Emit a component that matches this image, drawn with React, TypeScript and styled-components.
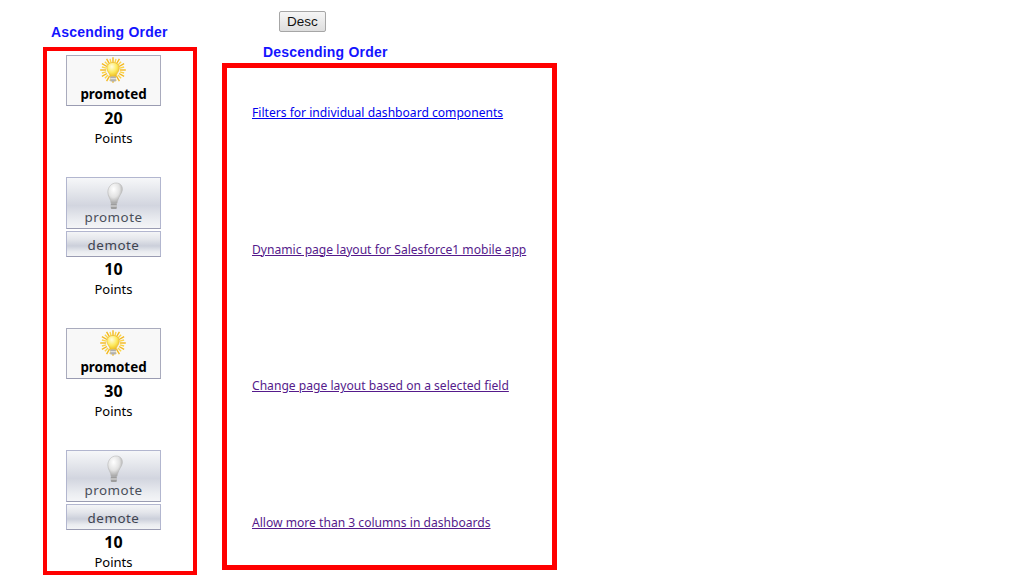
import React from "react";
import styled, { createGlobalStyle } from "styled-components";

const Global = createGlobalStyle`
  html, body { margin: 0; padding: 0; background: #fff; }
  body { font-family: "Noto Sans", "Open Sans", sans-serif; color: #000; }
`;

const Page = styled.div`
  display: flex;
  align-items: flex-start;
  padding-left: 43px;
  gap: 25px;
`;

const Column = styled.section`
  display: flex;
  flex-direction: column;
`;

const LeftColumn = styled(Column)`
  width: 154px;
  padding-top: 24px;
`;

const RightColumn = styled(Column)`
  width: 335px;
  padding-top: 11px;
`;

const Heading = styled.h2<{ $offset: number; $top?: number }>`
  margin: ${(p) => p.$top ?? 0}px 0 0;
  font: bold 14px/16px "Liberation Sans", Arial, sans-serif;
  color: #1414ff;
  letter-spacing: 0.2px;
  height: 16px;
  padding-left: ${(p) => p.$offset}px;
  white-space: nowrap;
`;

const SortButton = styled.button`
  align-self: flex-start;
  margin-left: 57px;
  width: 47px;
  height: 21px;
  padding: 0;
  border: 1px solid #a6a6a6;
  border-radius: 2px;
  background: linear-gradient(#f6f6f6, #dedede);
  font: 13.5px/18px "Liberation Sans", Arial, sans-serif;
  color: #111;
`;

const VoteBox = styled.div`
  box-sizing: border-box;
  margin-top: 7px;
  height: 528px;
  border: 4px solid #f00;
  padding: 4px 0 0 19px;
  display: flex;
  flex-direction: column;
`;

const Idea = styled.article<{ $gap: boolean }>`
  width: 95px;
  display: flex;
  flex-direction: column;
  align-items: center;
  padding-bottom: ${(p) => (p.$gap ? 29 : 0)}px;
`;

const greyFace = "linear-gradient(#f6f7f9 0%, #e6e8ed 25%, #d2d5df 55%, #ebedf1 85%, #f4f5f7 100%)";

const VoteTile = styled.div<{ $on: boolean }>`
  box-sizing: border-box;
  width: 95px;
  height: ${(p) => (p.$on ? 51 : 52)}px;
  border: 1px solid ${(p) => (p.$on ? "#a9abbd" : "#b2b6cf")};
  border-bottom-color: #9a9cb2;
  background: ${(p) => (p.$on ? "#f8f8f8" : greyFace)};
  display: flex;
  flex-direction: column;
  align-items: center;
  padding-top: 1px;
  font-size: 13.4px;
  line-height: 18px;
  letter-spacing: ${(p) => (p.$on ? 0 : 0.5)}px;
  font-weight: ${(p) => (p.$on ? 700 : 400)};
  color: ${(p) => (p.$on ? "#000" : "#4a4f5a")};
  svg { display: block; margin-top: ${(p) => (p.$on ? 0 : 3)}px; margin-bottom: ${(p) => (p.$on ? 0 : -2)}px; }
`;

const DemoteTile = styled.div`
  box-sizing: border-box;
  width: 95px;
  height: 26px;
  margin-top: 2px;
  border: 1px solid #b2b6cf;
  border-bottom-color: #9a9cb2;
  background: linear-gradient(#f4f5f7 0%, #e4e6eb 30%, #cbcfda 58%, #eaecf0 82%, #f3f4f6 100%);
  text-align: center;
  font-size: 13.4px;
  line-height: 26px;
  letter-spacing: 0.5px;
  color: #3e4350;
`;

const Score = styled.div`
  margin-top: 2px;
  font-size: 16px;
  font-weight: 700;
  line-height: 20px;
`;

const Unit = styled.div`
  font-size: 13px;
  line-height: 20px;
`;

const LinkBox = styled.div`
  box-sizing: border-box;
  margin-top: 3px;
  height: 507px;
  border: 5px solid #f00;
  padding: 36px 0 0 25px;
  display: grid;
  grid-auto-rows: 136.67px;
  align-content: start;
`;

const IdeaLink = styled.a<{ $visited?: boolean }>`
  font-size: 12.1px;
  line-height: 18px;
  height: 18px;
  justify-self: start;
  white-space: nowrap;
  color: ${(p) => (p.$visited ? "#551a8b" : "#0000ee")};
  text-decoration: underline;
`;

const Bulb = ({ lit }: { lit: boolean }) => {
  const id = lit ? "lit" : "off";
  const rays = Array.from({ length: 24 }, (_, i) => (i * 360) / 24);
  return (
    <svg width="28" height="28" viewBox="0 0 28 28" aria-hidden="true">
      <defs>
        <radialGradient id={id} cx="0.4" cy="0.3" r="0.8">
          <stop offset="0" stopColor={lit ? "#fffde0" : "#ffffff"} />
          <stop offset="0.5" stopColor={lit ? "#fdea60" : "#e2e2e2"} />
          <stop offset="1" stopColor={lit ? "#e8b010" : "#8f8f8f"} />
        </radialGradient>
      </defs>
      {lit &&
        rays.map((a, i) => (
          <line
            key={a}
            x1="13"
            y1={i % 2 ? 1.5 : 0.2}
            x2="13"
            y2="6"
            stroke={i % 2 ? "#fbd546" : "#f4b81e"}
            strokeWidth="1.4"
            transform={`rotate(${a} 13 13)`}
          />
        ))}
      {lit ? (
        <>
          <path
            d="M13 5.500c3.900 0 6.300 2.800 6.300 5.800 0 3.200-2.600 4.600-3.200 8.200h-5.900c-.5-3.600-3.400-5-3.400-8.200 0-3 2.400-5.800 6.200-5.800z"
            fill={`url(#${id})`}
            stroke="#e9b425"
            strokeWidth="0.6"
          />
          <rect x="10.300" y="19.500" width="5.600" height="5" rx="1" fill="#b0b0b0" />
          <rect x="10.300" y="21.200" width="5.600" height="1" fill="#ececec" />
        </>
      ) : (
        <>
          <path
            d="M16 1c4.400 0 7 3.200 6.300 7.200-.6 3.600-4.200 6.600-5.300 13.300h-6c.2-4.600-3.500-7-3.200-11.800C8.100 4.900 11.500 1 16 1z"
            fill={`url(#${id})`}
            stroke="#b8b8b8"
            strokeWidth="0.6"
          />
          <rect x="10.800" y="21.500" width="6" height="5.500" rx="1" fill="#9d9d9d" />
          <rect x="10.800" y="23.500" width="6" height="1" fill="#e4e4e4" />
        </>
      )}
    </svg>
  );
};

const ideas = [
  { points: 20, promoted: true },
  { points: 10, promoted: false },
  { points: 30, promoted: true },
  { points: 10, promoted: false },
];

const links = [
  { text: "Filters for individual dashboard components", visited: false },
  { text: "Dynamic page layout for Salesforce1 mobile app", visited: true },
  { text: "Change page layout based on a selected field", visited: true },
  { text: "Allow more than 3 columns in dashboards", visited: true },
];

export default function App() {
  return (
    <Page>
      <Global />
      <LeftColumn>
        <Heading $offset={8}>Ascending Order</Heading>
        <VoteBox>
          {ideas.map((idea, i) => (
            <Idea key={i} $gap={i < ideas.length - 1}>
              <VoteTile $on={idea.promoted}>
                <Bulb lit={idea.promoted} />
                {idea.promoted ? "promoted" : "promote"}
              </VoteTile>
              {!idea.promoted && <DemoteTile>demote</DemoteTile>}
              <Score>{idea.points}</Score>
              <Unit>Points</Unit>
            </Idea>
          ))}
        </VoteBox>
      </LeftColumn>
      <RightColumn>
        <SortButton type="button">Desc</SortButton>
        <Heading $offset={41} $top={12}>Descending Order</Heading>
        <LinkBox>
          {links.map((l) => (
            <IdeaLink key={l.text} href="#" $visited={l.visited}>
              {l.text}
            </IdeaLink>
          ))}
        </LinkBox>
      </RightColumn>
    </Page>
  );
}
